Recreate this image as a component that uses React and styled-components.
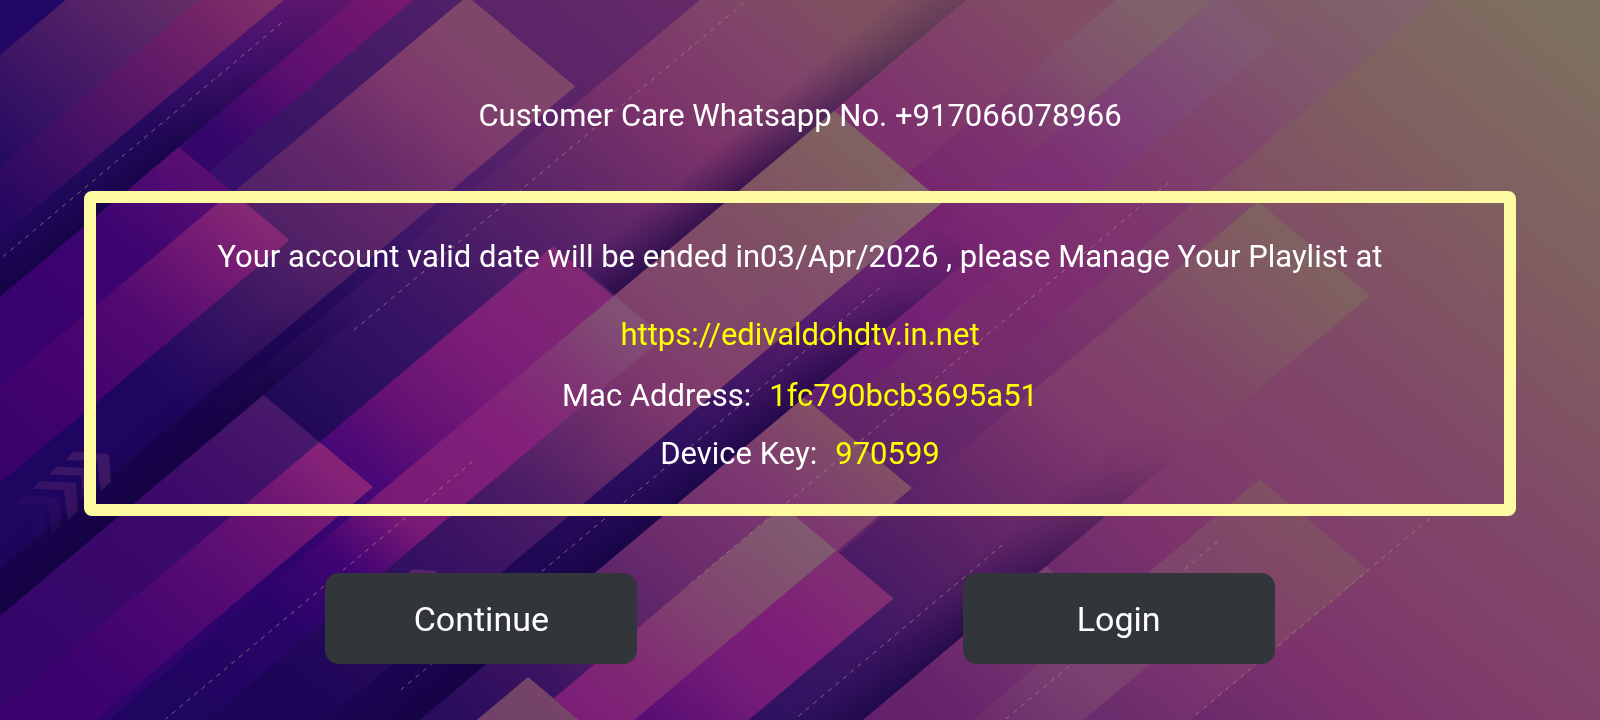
import React from 'react';
import styled, { createGlobalStyle } from 'styled-components';

const GlobalStyle = createGlobalStyle`
  * {
    box-sizing: border-box;
  }

  body {
    margin: 0;
    background: #1c0556;
    font-family: Roboto, 'Noto Sans', sans-serif;
    color: #ffffff;
  }
`;

const Page = styled.main`
  min-height: 100vh;
  display: flex;
  flex-direction: column;
  padding-top: 96px;
`;

const Backdrop = styled.svg`
  position: fixed;
  inset: 0;
  width: 100%;
  height: 100%;
  z-index: -1;
`;

const SupportLine = styled.p`
  margin: 0 0 55px;
  font-size: 31px;
  line-height: 40px;
  text-align: center;
`;

const NoticeFrame = styled.section`
  margin: 0 84px;
  padding: 34px 24px 30px;
  border: 12px solid #fdfaa2;
  border-radius: 8px;
  font-size: 31px;
  line-height: 40px;
  text-align: center;
`;

const NoticeText = styled.p`
  margin: 0 0 38px;
`;

const PortalLink = styled.a`
  display: block;
  margin-bottom: 21px;
  color: #ffff00;
  text-decoration: none;
`;

const DeviceList = styled.dl`
  margin: 0;
  display: flex;
  flex-direction: column;
  gap: 18px;
`;

const DeviceRow = styled.div`
  display: flex;
  justify-content: center;
  gap: 18px;
`;

const DeviceLabel = styled.dt`
  font-weight: 400;
`;

const DeviceValue = styled.dd`
  margin: 0;
  color: #ffff00;
`;

const Actions = styled.div`
  display: flex;
  justify-content: space-evenly;
  margin-top: 57px;
`;

const ActionButton = styled.button`
  width: 312px;
  height: 91px;
  padding: 0 16px;
  border: none;
  border-radius: 14px;
  background: #32363a;
  color: #ffffff;
  font-family: inherit;
  font-size: 34px;
  line-height: 44px;
  cursor: pointer;
`;

// The artwork is drawn on a skewed grid: x runs across the stripes,
// y runs along them (smaller y is further up and to the right).
const stripes = [
  { x: [-20, 55], y: [-80, 80], stops: [[80, '#220664'], [-80, '#220664']] },
  { x: [55, 167], y: [-180, 180], stops: [[167, '#240a62'], [0, '#471a66'], [-150, '#642c66']] },
  { x: [167, 238], y: [-250, 250], stops: [[220, '#230660'], [46, '#4a1266'], [-118, '#6d1f68'], [-227, '#803068']] },
  { x: [238, 297], y: [-310, 310], stops: [[290, '#1c0656'], [0, '#240a5c'], [-150, '#461270'], [-290, '#64186e']] },
  { x: [297, 347], y: [-360, 0], stops: [[-44, '#34066a'], [-172, '#5c0f70'], [-344, '#78186e']] },
  { x: [347, 388], y: [-400, 0], stops: [[-26, '#36106a'], [-132, '#3c1664'], [-369, '#4f1f68']] },
  { x: [388, 587], y: [-600, -390], stops: [[-390, '#5a2468'], [-560, '#652a68']] },
  { x: [388, 569], y: [-396, 580], stops: [[254, '#1e0660'], [102, '#3c1662'], [2, '#4f2066'], [-144, '#66296a'], [-251, '#7d386c'], [-354, '#80466a']] },
  { x: [297, 386], y: [-3, 400], stops: [[310, '#38026e'], [146, '#3c0470'], [9, '#580e72']] },
  { x: [386, 482], y: [-3, 500], stops: [[450, '#38026a'], [320, '#45036e'], [194, '#520a70'], [77, '#741a74'], [5, '#842874']] },
  { x: [569, 616], y: [-396, 620], stops: [[262, '#180450'], [88, '#200758'], [-30, '#2e0f60'], [-154, '#46196a'], [-317, '#5a2468']] },
  { x: [587, 811], y: [-820, 500], stops: [[250, '#1a0450'], [130, '#260c5c'], [0, '#351264'], [-100, '#421866'], [-270, '#5c2568'], [-450, '#7c346a'], [-590, '#80446a'], [-700, '#7f5060']] },
  { x: [616, 710], y: [174, 720], stops: [[700, '#33046a'], [350, '#3c0a6a'], [174, '#47196a']] },
  { x: [811, 936], y: [-950, -580], stops: [[-612, '#7c306e'], [-737, '#803e6a'], [-874, '#824e64']] },
  { x: [1018, 1112], y: [-1130, -1020], stops: [[-1031, '#80586a'], [-1130, '#806068']] },
  { x: [936, 1018], y: [-1030, -560], stops: [[-580, '#76266f'], [-709, '#7c326e'], [-834, '#80506c'], [-955, '#80606a']] },
  { x: [811, 993], y: [-589, 720], stops: [[448, '#1c0456'], [260, '#2e0e60'], [140, '#3e1464'], [39, '#4e1e66'], [-73, '#6a2c6a'], [-165, '#7e386c'], [-287, '#80486a'], [-408, '#7f5064'], [-563, '#806060']] },
  { x: [936, 993], y: [-589, 0], stops: [[0, 'rgba(130, 60, 110, 0)'], [-300, 'rgba(130, 60, 110, 0.3)'], [-589, 'rgba(140, 100, 140, 0.25)']] },
  { x: [710, 812], y: [-218, 720], stops: [[300, '#2e046c'], [160, '#4a0876'], [70, '#661274'], [-63, '#7c1e78'], [-200, '#802874']] },
  { x: [811, 893], y: [-220, 720], stops: [[532, '#200560'], [380, '#2a0468'], [275, '#400474'], [240, '#540a74'], [180, '#781a76'], [0, '#82207a'], [-100, '#803474'], [-200, '#815074']] },
  { x: [710, 799], y: [174, 720], stops: [[596, '#3c026e'], [422, '#520a72'], [268, '#6e1674'], [187, '#862378']] },
  { x: [993, 1072], y: [-600, 600], stops: [[260, '#1a0550'], [37, '#240a58'], [-117, '#2e1060'], [-413, '#5c1f6c'], [-515, '#702472'], [-590, '#78246f']] },
  { x: [1018, 1112], y: [-1030, -560], stops: [[-560, '#7a2672'], [-726, '#7c3074'], [-845, '#7e4276'], [-1009, '#805a72']] },
  { x: [1072, 1112], y: [-570, -250], stops: [[-300, '#642070'], [-415, '#722074'], [-560, '#7a2672']] },
  { x: [1112, 1205], y: [-1220, -250], stops: [[-290, '#602468'], [-447, '#762a6e'], [-591, '#7c2c70'], [-765, '#7e386c'], [-877, '#80446c'], [-1000, '#80546c'], [-1155, '#80626a']] },
  { x: [1205, 2100], y: [-1400, 200], stops: [[-89, '#60206a'], [-287, '#6a2a6c'], [-430, '#7c326c'], [-600, '#80406a'], [-760, '#804868'], [-941, '#805662'], [-1060, '#806060'], [-1200, '#7f6860'], [-1280, '#7e7060']] },
  { x: [1205, 1257], y: [-860, -250], stops: [[-277, '#5c2268'], [-377, '#66286a'], [-539, '#78306c'], [-777, '#80446a'], [-860, '#804c66']] },
  { x: [1257, 1444], y: [-854, 200], stops: [[77, '#2e1260'], [-73, '#3c1664'], [-257, '#5a2266'], [-391, '#702e6a'], [-494, '#803a6c'], [-615, '#804468'], [-749, '#805664'], [-834, '#806060']] },
  { x: [1072, 1252], y: [-277, 420], stops: [[330, '#2a0c5c'], [210, '#3c1462'], [146, '#501f68'], [-11, '#6c2c6c'], [-158, '#7d3870'], [-246, '#804a68'], [-277, '#825064']] },
  { x: [1120, 1252], y: [234, 420], stops: [[234, '#754468'], [330, '#704068']] },
  { x: [1163, 1252], y: [-151, 234], stops: [[228, '#7c1e78'], [143, '#802874'], [33, '#804070'], [-68, '#80506e'], [-141, '#805a70']] },
  { x: [1252, 1347], y: [-151, 234], stops: [[170, '#5a0e74'], [59, '#741c78'], [-31, '#7e1e78'], [-140, '#803072']] },
  { x: [1444, 1536], y: [-311, 100], stops: [[0, '#60206a'], [-100, '#68246c'], [-311, '#7c4070']] },
  { x: [1536, 1629], y: [-578, 0], stops: [[-100, '#6c2c6c'], [-230, '#7a4070'], [-449, '#80456a'], [-578, '#805062']] },
  { x: [1629, 1718], y: [-578, 0], stops: [[-216, '#6a2c6c'], [-317, '#7a3270'], [-449, '#804268'], [-554, '#804e64']] },
];

// Soft dark edges that lift one stripe above its neighbour.
const shades = [
  { x: [250, 297], y: [-330, 310], ends: [-330, 60], opacity: 0.6 },
  { x: [540, 616], y: [0, 620], ends: [0, 160], opacity: 0.6 },
  { x: [748, 811], y: [-820, -220], ends: [-1000, -450], opacity: 0.6 },
  { x: [1012, 1072], y: [-600, 600], ends: [-600, -300], opacity: 0.6 },
  { x: [1376, 1444], y: [-560, 100], ends: [-560, -200], opacity: 0.6 },
];

const seams = [
  { x: 259, y: [-213, 259] },
  { x: 627, y: [-621, 37] },
  { x: 858, y: [65, 580] },
  { x: 1026, y: [-450, 356] },
  { x: 1163, y: [-798, 10] },
  { x: 1386, y: [-296, 48] },
  { x: 1563, y: [-480, -123] },
  { x: 1718, y: [-681, -287] },
];

const chevrons = [0.34, 0.3, 0.26, 0.1, 0.04];
const chevronShape = 'M66 460L73 452L109 454L111 482L101 491L97 461Z';

const StripeArtwork = () => (
  <Backdrop viewBox="0 0 1600 720" preserveAspectRatio="xMidYMid slice" aria-hidden="true">
    <defs>
      {stripes.map(({ stops }, i) => {
        const start = stops[0][0];
        const end = stops[stops.length - 1][0];
        return (
          <linearGradient key={i} id={`stripe-${i}`} gradientUnits="userSpaceOnUse" x1="0" x2="0" y1={start} y2={end}>
            {[...stops]
              .map(([at, color]) => ({ offset: (start - at) / (start - end), color }))
              .sort((a, b) => a.offset - b.offset)
              .map(({ offset, color }) => (
                <stop key={offset} offset={offset} stopColor={color} />
              ))}
          </linearGradient>
        );
      })}
      <linearGradient id="shade">
        <stop offset="0" stopColor="#1a0344" stopOpacity="0" />
        <stop offset="1" stopColor="#12023c" />
      </linearGradient>
      {shades.map(({ x, y, ends }, i) => (
        <React.Fragment key={i}>
          <linearGradient id={`fade-${i}`} gradientUnits="userSpaceOnUse" x1="0" x2="0" y1={ends[0]} y2={ends[1]}>
            <stop offset="0" stopColor="#000000" />
            <stop offset="1" stopColor="#ffffff" />
          </linearGradient>
          <mask id={`mask-${i}`} maskUnits="userSpaceOnUse" x={x[0]} y={y[0]} width={x[1] - x[0]} height={y[1] - y[0]}>
            <rect x={x[0]} y={y[0]} width={x[1] - x[0]} height={y[1] - y[0]} fill={`url(#fade-${i})`} />
          </mask>
        </React.Fragment>
      ))}
    </defs>
    <g transform="matrix(0.596 0.5 -0.596 0.5 0 0)">
      {stripes.map(({ x, y }, i) => (
        <rect key={i} x={x[0]} y={y[0]} width={x[1] - x[0] + 1} height={y[1] - y[0]} fill={`url(#stripe-${i})`} />
      ))}
      {shades.map(({ x, y, opacity }, i) => (
        <rect
          key={i}
          x={x[0]}
          y={y[0]}
          width={x[1] - x[0]}
          height={y[1] - y[0]}
          fill="url(#shade)"
          opacity={opacity}
          mask={`url(#mask-${i})`}
        />
      ))}
      {seams.map(({ x, y }) => (
        <line
          key={x}
          x1={x}
          x2={x}
          y1={y[0]}
          y2={y[1]}
          stroke="#a88c80"
          strokeOpacity="0.7"
          strokeDasharray="4.5 5.2"
          vectorEffect="non-scaling-stroke"
        />
      ))}
    </g>
    {chevrons.map((opacity, i) => (
      <path
        key={i}
        d={chevronShape}
        fill="#7c3a78"
        opacity={opacity}
        transform={`translate(${i * -16.5} ${i * 14.5})`}
      />
    ))}
    <path d={chevronShape} fill="#7c3a78" opacity="0.5" transform="translate(364 271) scale(0.66)" />
  </Backdrop>
);

const device = [
  { label: 'Mac Address:', value: '1fc790bcb3695a51' },
  { label: 'Device Key:', value: '970599' },
];

const App = () => (
  <>
    <GlobalStyle />
    <StripeArtwork />
    <Page>
      <SupportLine>Customer Care Whatsapp No. +917066078966</SupportLine>
      <NoticeFrame>
        <NoticeText>
          Your account valid date will be ended in03/Apr/2026 , please Manage Your Playlist at
        </NoticeText>
        <PortalLink href="https://edivaldohdtv.in.net">https://edivaldohdtv.in.net</PortalLink>
        <DeviceList>
          {device.map(({ label, value }) => (
            <DeviceRow key={label}>
              <DeviceLabel>{label}</DeviceLabel>
              <DeviceValue>{value}</DeviceValue>
            </DeviceRow>
          ))}
        </DeviceList>
      </NoticeFrame>
      <Actions>
        <ActionButton type="button">Continue</ActionButton>
        <ActionButton type="button">Login</ActionButton>
      </Actions>
    </Page>
  </>
);

export default App;
